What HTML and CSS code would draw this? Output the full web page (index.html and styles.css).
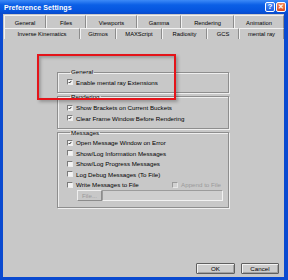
FILE: index.html
```html
<!DOCTYPE html>
<html lang="en">
<head>
  <meta charset="UTF-8" />
  <meta name="viewport" content="width=device-width, initial-scale=1.0" />
  <title>Preference Settings</title>
  <link rel="stylesheet" href="styles.css">
</head>
<body>
  <div class="window">
    <div class="titlebar">
      <span class="title">Preference Settings</span>
      <div class="title-buttons">
        <span class="tb-help">?</span>
        <span class="tb-close">&#x2715;</span>
      </div>
    </div>

    <div class="dialog">
      <div class="tabs">
        <div class="tab-row row-back">
          <div class="tab">General</div>
          <div class="tab">Files</div>
          <div class="tab">Viewports</div>
          <div class="tab">Gamma</div>
          <div class="tab">Rendering</div>
          <div class="tab">Animation</div>
        </div>
        <div class="tab-row row-front">
          <div class="tab">Inverse Kinematics</div>
          <div class="tab">Gizmos</div>
          <div class="tab">MAXScript</div>
          <div class="tab">Radiosity</div>
          <div class="tab">GCS</div>
          <div class="tab active">mental ray</div>
        </div>
      </div>

      <div class="page">
        <fieldset class="group group-general">
          <legend>General</legend>
          <div class="check-row">
            <span class="box"><svg viewBox="0 0 6 6"><polyline points="1,3 2.4,4.5 5,1.4" /></svg></span>
            Enable mental ray Extensions
          </div>
        </fieldset>

        <fieldset class="group group-rendering">
          <legend>Rendering</legend>
          <div class="check-row">
            <span class="box"><svg viewBox="0 0 6 6"><polyline points="1,3 2.4,4.5 5,1.4" /></svg></span>
            Show Brackets on Current Buckets
          </div>
          <div class="check-row">
            <span class="box"><svg viewBox="0 0 6 6"><polyline points="1,3 2.4,4.5 5,1.4" /></svg></span>
            Clear Frame Window Before Rendering
          </div>
        </fieldset>

        <fieldset class="group group-messages">
          <legend>Messages</legend>
          <div class="check-row">
            <span class="box"><svg viewBox="0 0 6 6"><polyline points="1,3 2.4,4.5 5,1.4" /></svg></span>
            Open Message Window on Error
          </div>
          <div class="check-row">
            <span class="box"></span>
            Show/Log Information Messages
          </div>
          <div class="check-row">
            <span class="box"></span>
            Show/Log Progress Messages
          </div>
          <div class="check-row">
            <span class="box"></span>
            Log Debug Messages (To File)
          </div>
          <div class="check-row">
            <span class="box"></span>
            Write Messages to File
            <span class="append disabled">
              <span class="box"></span>
              Append to File
            </span>
          </div>
          <div class="file-row">
            <span class="file-btn">File...</span>
            <span class="file-field"></span>
          </div>
        </fieldset>
      </div>

      <div class="footer">
        <span class="btn">OK</span>
        <span class="btn">Cancel</span>
      </div>
    </div>

    <div class="highlight"></div>
  </div>
</body>
</html>
```

FILE: styles.css
```css
body {
  margin: 0;
  font-family: "Liberation Sans", Arial, sans-serif;
  font-size: 6.2px;
  color: #000;
  background-color: #c8c8c8;
}

.window {
  position: relative;
  width: 288px;
  height: 280px;
  display: flex;
  flex-direction: column;
  background-color: #0a4ad0;
  overflow: hidden;
}

/* barra de titulo */
.titlebar {
  height: 14px;
  display: flex;
  align-items: center;
  justify-content: space-between;
  padding: 0 2px 0 4px;
  background: linear-gradient(#3d8af7, #0b5fe6 35%, #0554de 80%, #0a49c8);
}

.title {
  color: #fff;
  font-weight: bold;
  font-size: 7px;
  letter-spacing: 0.1px;
}

.title-buttons {
  display: flex;
  gap: 1px;
}

.title-buttons span {
  width: 10px;
  height: 10px;
  box-sizing: border-box;
  border: 1px solid #fff;
  border-radius: 2px;
  color: #fff;
  font-weight: bold;
  font-size: 8px;
  line-height: 8px;
  text-align: center;
}

.tb-help {
  background: linear-gradient(#4a8cf8, #1f5fe0);
}

.tb-close {
  background: linear-gradient(#f08a5f, #dc4a1c);
  font-size: 7px !important;
}

.dialog {
  flex: 1;
  display: flex;
  flex-direction: column;
  margin: 0 4px 3px 3px;
  background-color: #c8c8c8;
}

/* abas */
.tabs {
  padding: 1px 0 0 1px;
  font-size: 5.8px;
}

.tab-row {
  display: grid;
}

.row-back {
  height: 13px;
  grid-template-columns: 42px 40px 51px 44px 53px 50px;
}

.row-front {
  height: 11px;
  grid-template-columns: 76px 36px 46px 45px 32px 45px;
}

.tab {
  display: flex;
  align-items: center;
  justify-content: center;
  border-top: 1px solid #f2f2f2;
  border-left: 1px solid #f2f2f2;
  border-right: 1px solid #8c8c8c;
  white-space: nowrap;
}

.row-back .tab {
  padding-top: 1px;
}

/* pagina */
.page {
  padding: 29px 0 0 54px;
}

.group {
  width: 172px;
  box-sizing: border-box;
  margin: 0;
  padding: 1px 7px 4px 9px;
  border: 1px solid #8e8e8e;
  box-shadow: inset 1px 1px #efefef, 1px 1px #efefef;
}

legend {
  margin-left: 3px;
  padding: 0 1px;
  line-height: 8px;
}

.group-rendering {
  padding-top: 2px;
}

.group-messages {
  padding-bottom: 6px;
}

.check-row {
  height: 10.5px;
  display: flex;
  align-items: center;
  gap: 3px;
  white-space: nowrap;
}

.box {
  width: 6px;
  height: 6px;
  box-sizing: border-box;
  border: 1px solid;
  border-color: #7a7a7a #ededed #ededed #7a7a7a;
  background-color: #f3f3f3;
  display: flex;
}

.box svg {
  width: 100%;
  height: 100%;
  fill: none;
  stroke: #111;
  stroke-width: 1.3;
}

.append {
  margin-left: auto;
  display: flex;
  align-items: center;
  gap: 3px;
}

.disabled {
  color: #9a9a9a;
}

.disabled .box {
  background-color: #d2d2d2;
  border-color: #9a9a9a #e6e6e6 #e6e6e6 #9a9a9a;
}

.file-row {
  height: 11px;
  display: flex;
  margin-right: -2px;
  margin-left: 10px;
}

.file-btn {
  width: 25px;
  box-sizing: border-box;
  display: flex;
  align-items: center;
  justify-content: center;
  color: #9a9a9a;
  border: 1px solid;
  border-color: #efefef #8c8c8c #8c8c8c #efefef;
}

.file-field {
  flex: 1;
  box-sizing: border-box;
  border: 1px solid;
  border-color: #9c9c9c #f2f2f2 #f2f2f2 #9c9c9c;
  background-color: #cfcfcf;
}

/* botoes */
.footer {
  margin-top: auto;
  display: flex;
  justify-content: flex-end;
  gap: 6px;
  padding: 0 5px 3px 0;
}

.btn {
  height: 11px;
  box-sizing: border-box;
  display: flex;
  align-items: center;
  justify-content: center;
  border: 1px solid #606060;
  border-radius: 1px;
  background-color: #cdcdcd;
  box-shadow: inset 1px 1px #f2f2f2, inset -1px -1px #a2a2a2;
}

.btn:first-child {
  width: 39px;
}

.btn:last-child {
  width: 38px;
}

/* destaque vermelho */
.highlight {
  position: absolute;
  left: 37px;
  top: 54px;
  width: 139px;
  height: 46px;
  box-sizing: border-box;
  border: 2px solid #e4141a;
  box-shadow: inset 2px 2px 3px rgba(0, 0, 0, 0.22), 2px 2px 3px rgba(0, 0, 0, 0.25);
}
```
